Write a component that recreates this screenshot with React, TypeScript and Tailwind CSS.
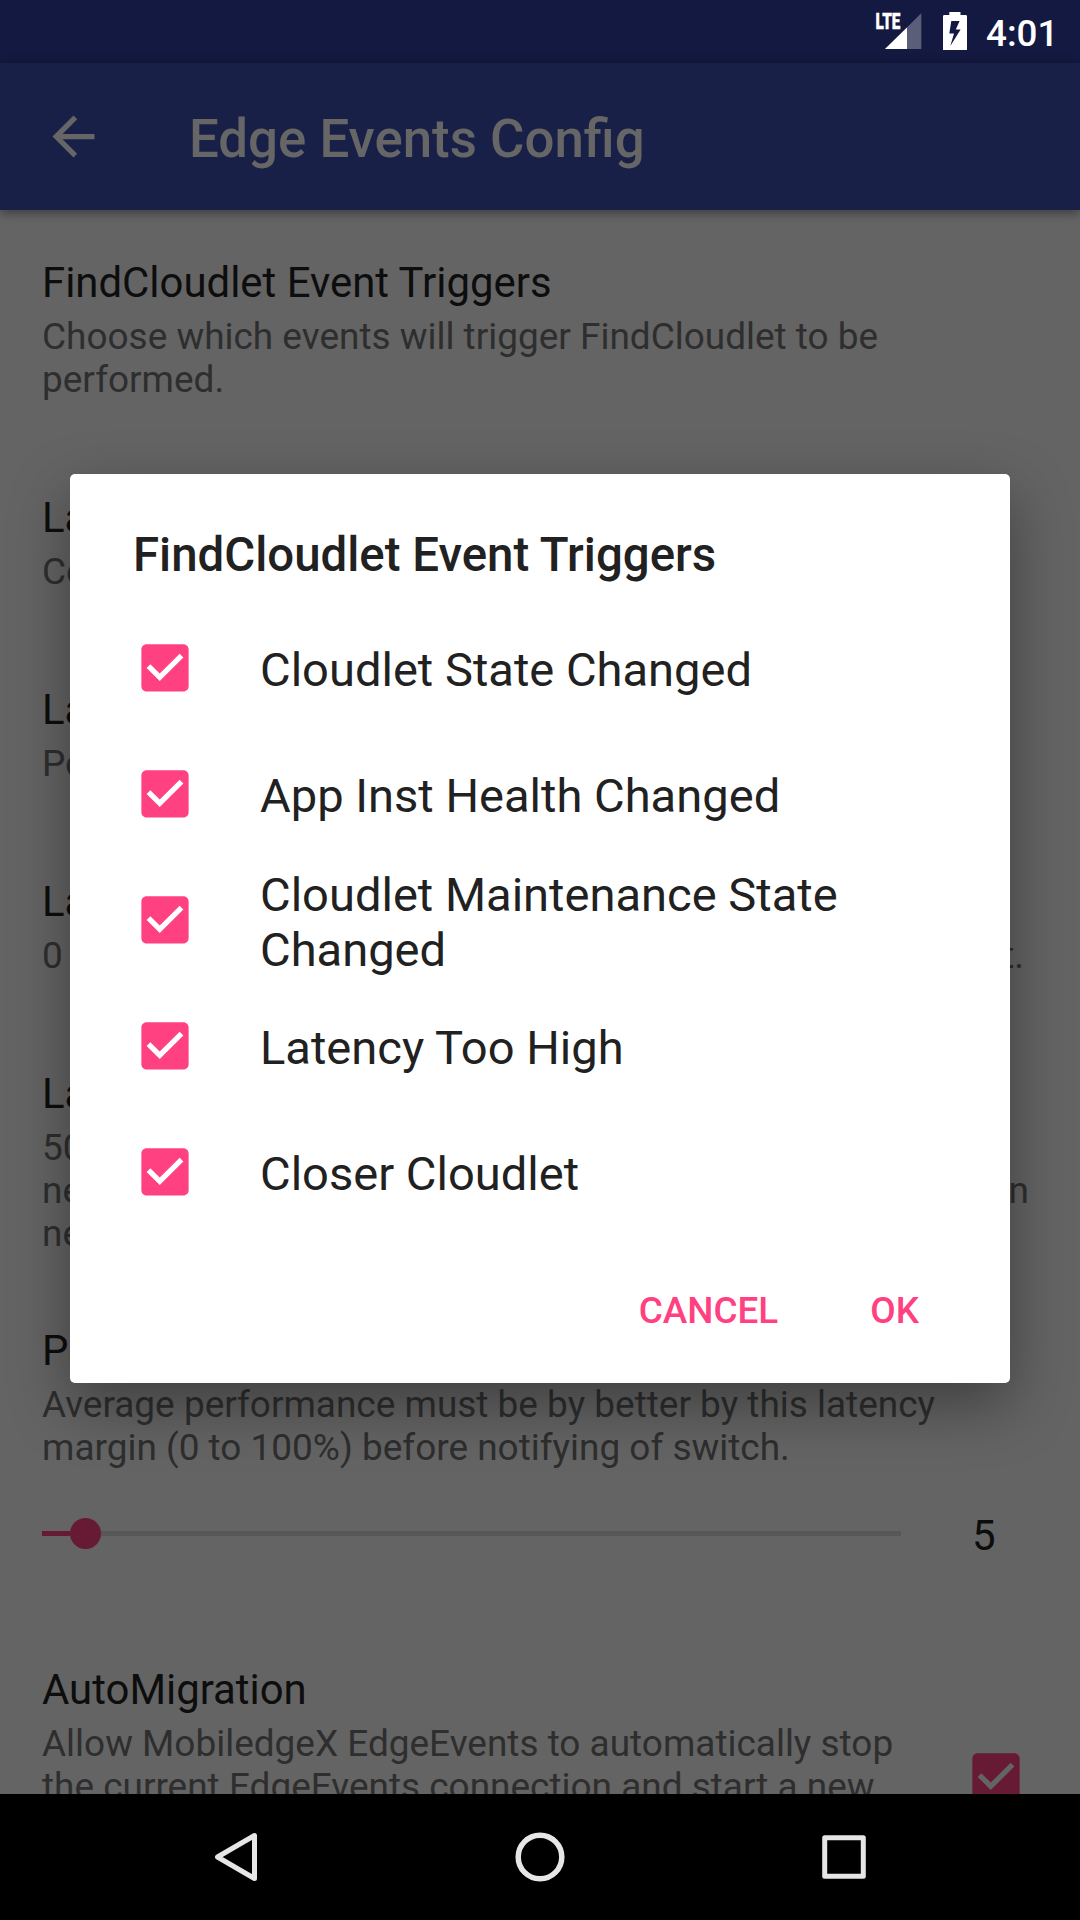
import type { ReactNode } from "react";

const TRIGGERS = [
  { label: "Cloudlet State Changed", offset: "mt-[2px]" },
  { label: "App Inst Health Changed", offset: "mt-[2px]" },
  { label: "Cloudlet Maintenance State Changed", offset: "mt-[4px]" },
  { label: "Latency Too High", offset: "mt-[2px]" },
  { label: "Closer Cloudlet", offset: "mt-[2px]" },
];

function StatusBar() {
  return (
    <div className="flex h-[63px] shrink-0 items-start bg-[#131940] pl-[872px] text-white">
      <svg className="mt-[8px] h-[42px] w-[50px]" viewBox="-4 -4 50 42" fill="#fff">
        <path d="M45.3 1.3V37H9z" fillOpacity=".3" />
        <path d="M31 15.6V37H9z" />
        <text x="-0.6" y="17.2" stroke="#fff" strokeWidth=".4" className="text-[22px] font-black" textLength="25" lengthAdjust="spacingAndGlyphs">
          LTE
        </text>
      </svg>
      <svg className="ml-[21px] mt-[12px] h-[38px] w-[24px]" viewBox="0 0 24 38">
        <path fillRule="evenodd" d="M6.3 0H17.5V3H22.6Q24 3 24 4.4V38H0V4.4Q0 3 1.4 3H6.3zM8.3 9L6.3 21.5H11L7.3 34L17.6 17.5H12.8L16.6 9z" fill="#fff" />
      </svg>
      <span className="ml-[19px] mt-[12px] text-[36.75px] font-medium leading-[43px]">4:01</span>
    </div>
  );
}

function Toolbar() {
  return (
    <div className="relative flex h-[147px] shrink-0 items-center bg-[#192048] pl-[42px] text-[#666] shadow-[0_3px_10px_rgba(0,0,0,0.4)]">
      <svg className="h-[63px] w-[63px]" viewBox="0 0 24 24" fill="currentColor">
        <path d="M20 11H7.83l5.59-5.59L12 4l-8 8 8 8 1.41-1.41L7.83 13H20v-2z" />
      </svg>
      <h1 className="ml-[84px] mt-[5px] text-[52.8px] font-medium leading-[62px]">Edge Events Config</h1>
    </div>
  );
}

function Checkbox({ className }: { className: string }) {
  return (
    <svg className={className} viewBox="2.86 2.9 18.28 18.28" fill="currentColor">
      <path d="M19 3H5c-1.11 0-2 .9-2 2v14c0 1.1.89 2 2 2h14c1.11 0 2-.9 2-2V5c0-1.1-.89-2-2-2zm-9 14l-5-5 1.41-1.41L10 14.17l7.59-7.59L19 8l-9 9z" />
    </svg>
  );
}

function Preference({ title, children, className = "mb-[92px]" }: { title: string; children: ReactNode; className?: string }) {
  return (
    <section className={className}>
      <h2 className="text-[41.9px] leading-[49px] text-[#0d0d0d]">{title}</h2>
      <div className="mt-[8px] whitespace-nowrap text-[36.96px] leading-[43px] text-[#2e2e2e]">{children}</div>
    </section>
  );
}

function Dialog() {
  return (
    <div className="absolute left-[70px] top-[474px] flex h-[909px] w-[940px] flex-col rounded-[5px] bg-white text-[#212121] shadow-[0_22px_60px_rgba(0,0,0,0.37)]">
      <h2 className="ml-[63px] mt-[54px] text-[47.4px] font-medium leading-[55px]">FindCloudlet Event Triggers</h2>
      <ul className="mt-[22px]">
        {TRIGGERS.map(({ label, offset }) => (
          <li key={label} className="flex h-[126px] items-center pl-[71px]">
            <Checkbox className="h-[48px] w-[48px] shrink-0 text-[#ff4081]" />
            <span className={`ml-[71px] w-[620px] text-[47.08px] leading-[55px] ${offset}`}>{label}</span>
          </li>
        ))}
      </ul>
      <div className="mt-[54px] flex justify-end gap-[92px] pr-[91px] text-[36.9px] font-medium leading-[43px] text-[#ff4081]">
        <button>CANCEL</button>
        <button>OK</button>
      </div>
    </div>
  );
}

function NavBar() {
  return (
    <nav className="relative flex h-[126px] shrink-0 items-center justify-between bg-black px-[212px]">
      <svg className="h-[52px] w-[48px]" viewBox="0 0 48 52" fill="none" stroke="#e6e6e6" strokeWidth="5" strokeLinejoin="round">
        <path d="M42.5 4.5V47.5L5.5 26z" />
      </svg>
      <svg className="h-[52px] w-[52px]" viewBox="0 0 52 52" fill="none" stroke="#e6e6e6" strokeWidth="5.5">
        <circle cx="26" cy="26" r="21.8" />
      </svg>
      <svg className="h-[48px] w-[48px]" viewBox="0 0 48 48" fill="none" stroke="#e6e6e6" strokeWidth="5" strokeLinejoin="round">
        <path d="M4.7 4.7H43.3V43.3H4.7z" />
      </svg>
    </nav>
  );
}

export default function App() {
  return (
    <div className="relative flex h-[1920px] w-[1080px] flex-col overflow-hidden bg-[#646464] font-['Roboto',sans-serif]">
      <StatusBar />
      <Toolbar />
      <main className="h-[1584px] shrink-0 overflow-hidden px-[42px] pt-[48px]">
        <Preference title="FindCloudlet Event Triggers">
          Choose which events will trigger FindCloudlet to be
          <br />
          performed.
        </Preference>
        <Preference title="Latency Test Mode">Connect</Preference>
        <Preference title="Latency Test Port">Port number</Preference>
        <Preference title="Latency Test Interval">
          <div className="flex w-[982px] justify-between">
            <span>0 means test once</span>
            <span>limit.</span>
          </div>
        </Preference>
        <Preference title="Latency Threshold" className="mb-[71px]">
          50 ms
          <div className="flex w-[987px] justify-between">
            <span>new cloudlet</span>
            <span>when</span>
          </div>
          needed
        </Preference>
        <Preference title="Performance Margin" className="">
          Average performance must be by better by this latency
          <br />
          margin (0 to 100%) before notifying of switch.
        </Preference>
        <div className="mb-[100px] mt-[32px] flex h-[64px] items-center">
          <div className="flex w-[859px] items-center">
            <div className="h-[5px] w-[28px] bg-[#661a34]" />
            <div className="h-[31px] w-[31px] rounded-full bg-[#661a34]" />
            <div className="h-[5px] flex-1 bg-[#575757]" />
          </div>
          <span className="ml-[71px] mt-[4px] text-[42px] leading-[49px] text-[#0d0d0d]">5</span>
        </div>
        <div className="flex items-start">
          <Preference title="AutoMigration" className="w-[930px]">
            Allow MobiledgeX EdgeEvents to automatically stop
            <br />
            the current EdgeEvents connection and start a new
          </Preference>
          <Checkbox className="mt-[88px] h-[48px] w-[48px] text-[#661a34]" />
        </div>
      </main>
      <NavBar />
      <Dialog />
    </div>
  );
}
